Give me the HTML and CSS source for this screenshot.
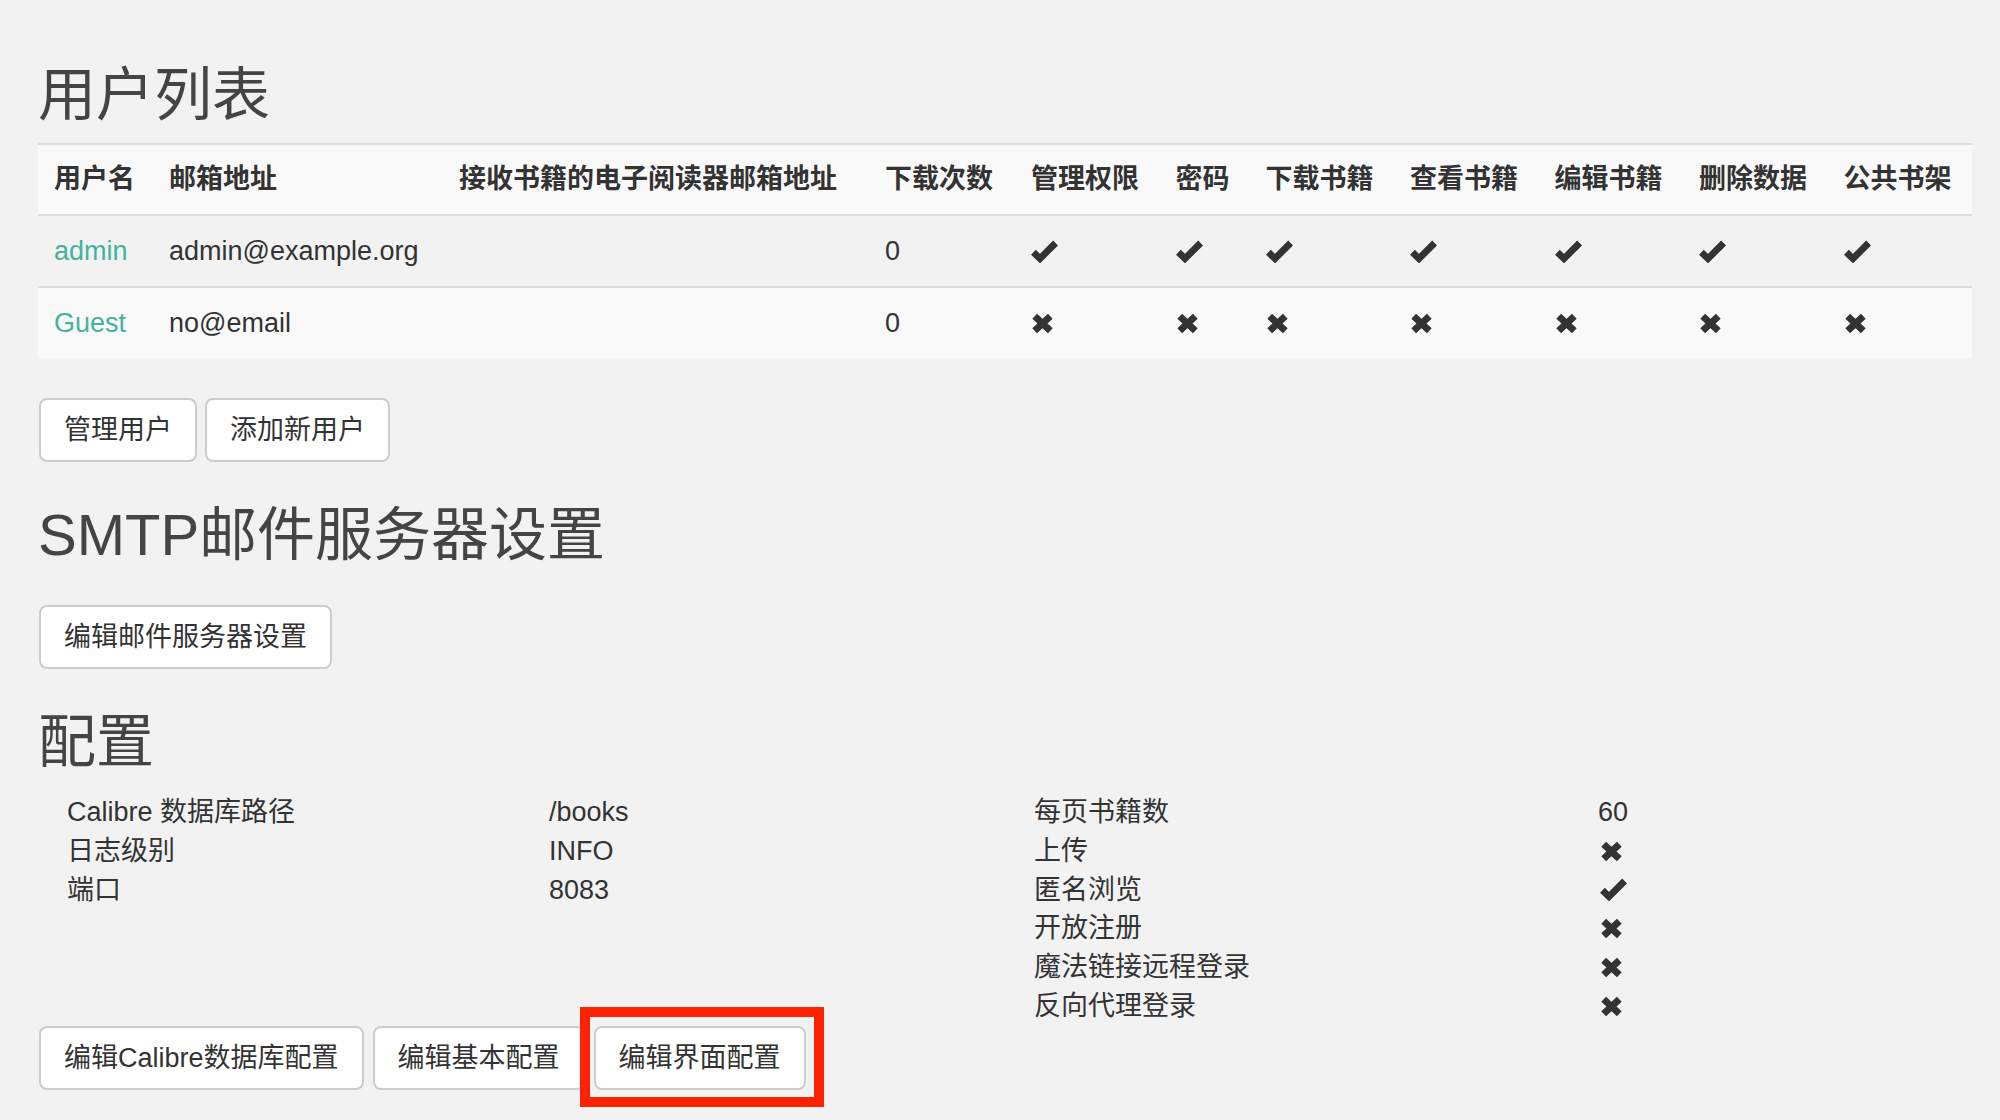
FILE: index.html
```html
<!DOCTYPE html>
<html lang="zh-CN">
<head>
<meta charset="utf-8">
<title>管理</title>
<link rel="stylesheet" href="styles.css">
</head>
<body>
<svg class="defs" width="0" height="0" aria-hidden="true">
  <symbol id="i-ok" viewBox="0 0 27 23">
    <polyline points="2.4,12.2 9,18.6 24.6,3" fill="none" stroke="#333" stroke-width="6.8" stroke-linejoin="miter" stroke-miterlimit="6"/>
  </symbol>
  <symbol id="i-no" viewBox="0 0 23 21">
    <path d="M3.7 3.3 L19.3 17.7 M19.3 3.3 L3.7 17.7" fill="none" stroke="#333" stroke-width="7"/>
  </symbol>
</svg>
<div class="page">
  <h2 class="title first">用户列表</h2>
  <table class="users">
    <colgroup>
      <col class="c-name"><col class="c-mail"><col class="c-kindle"><col class="c-dl">
      <col class="c-4"><col class="c-pw"><col class="c-4"><col class="c-4"><col class="c-4"><col class="c-4"><col class="c-4">
    </colgroup>
    <thead>
      <tr>
        <th>用户名</th><th>邮箱地址</th><th>接收书籍的电子阅读器邮箱地址</th><th>下载次数</th>
        <th>管理权限</th><th>密码</th><th>下载书籍</th><th>查看书籍</th><th>编辑书籍</th><th>删除数据</th><th>公共书架</th>
      </tr>
    </thead>
    <tbody>
      <tr class="odd">
        <td><a class="ulink" href="#">admin</a></td><td>admin@example.org</td><td></td><td>0</td>
        <td><div class="ic"><svg class="ok"><use href="#i-ok"/></svg></div></td>
        <td><div class="ic"><svg class="ok"><use href="#i-ok"/></svg></div></td>
        <td><div class="ic"><svg class="ok"><use href="#i-ok"/></svg></div></td>
        <td><div class="ic"><svg class="ok"><use href="#i-ok"/></svg></div></td>
        <td><div class="ic"><svg class="ok"><use href="#i-ok"/></svg></div></td>
        <td><div class="ic"><svg class="ok"><use href="#i-ok"/></svg></div></td>
        <td><div class="ic"><svg class="ok"><use href="#i-ok"/></svg></div></td>
      </tr>
      <tr class="even">
        <td><a class="ulink" href="#">Guest</a></td><td>no@email</td><td></td><td>0</td>
        <td><div class="ic"><svg class="no"><use href="#i-no"/></svg></div></td>
        <td><div class="ic"><svg class="no"><use href="#i-no"/></svg></div></td>
        <td><div class="ic"><svg class="no"><use href="#i-no"/></svg></div></td>
        <td><div class="ic"><svg class="no"><use href="#i-no"/></svg></div></td>
        <td><div class="ic"><svg class="no"><use href="#i-no"/></svg></div></td>
        <td><div class="ic"><svg class="no"><use href="#i-no"/></svg></div></td>
        <td><div class="ic"><svg class="no"><use href="#i-no"/></svg></div></td>
      </tr>
    </tbody>
  </table>
  <div class="btn-row">
    <a class="btn" href="#">管理用户</a>
    <a class="btn" href="#">添加新用户</a>
  </div>

  <h2 class="title">SMTP邮件服务器设置</h2>
  <div class="btn-row smtp">
    <a class="btn" href="#">编辑邮件服务器设置</a>
  </div>

  <h2 class="title">配置</h2>
  <div class="config">
    <div class="cfg-col">
      <div class="kv kv-left">
        <div>Calibre 数据库路径</div><div>/books</div>
        <div>日志级别</div><div>INFO</div>
        <div>端口</div><div>8083</div>
      </div>
    </div>
    <div class="cfg-col">
      <div class="kv kv-right">
        <div>每页书籍数</div><div>60</div>
        <div>上传</div><div class="ic"><svg class="no"><use href="#i-no"/></svg></div>
        <div>匿名浏览</div><div class="ic"><svg class="ok"><use href="#i-ok"/></svg></div>
        <div>开放注册</div><div class="ic"><svg class="no"><use href="#i-no"/></svg></div>
        <div>魔法链接远程登录</div><div class="ic"><svg class="no"><use href="#i-no"/></svg></div>
        <div>反向代理登录</div><div class="ic"><svg class="no"><use href="#i-no"/></svg></div>
      </div>
    </div>
  </div>
  <div class="btn-row bottom">
    <a class="btn" href="#">编辑Calibre数据库配置</a>
    <a class="btn" href="#">编辑基本配置</a>
    <div class="highlight-wrap">
      <a class="btn" href="#">编辑界面配置</a>
      <div class="highlight"></div>
    </div>
  </div>
</div>
</body>
</html>
```

FILE: styles.css
```css
html, body {
  margin: 0;
  padding: 0;
  background: #f2f2f2;
}

body {
  font-family: "Liberation Sans", "Noto Sans CJK SC", sans-serif;
  font-size: 27px;
  line-height: 38.6px;
  color: #333;
}

.defs {
  position: absolute;
  width: 0;
  height: 0;
  overflow: hidden;
}

.page {
  box-sizing: border-box;
  min-height: 1120px;
  padding: 22px 28px 0 38px;
}

.title {
  font-size: 58px;
  font-weight: 400;
  line-height: 64px;
  color: #444;
  margin: 41px 0 19px;
}

.title.first {
  margin-bottom: 16px;
}

/* users table */
.users {
  width: 100%;
  table-layout: fixed;
  border-collapse: collapse;
  border-spacing: 0;
  margin-bottom: 40px;
}

.c-name { width: 115px; }
.c-mail { width: 290px; }
.c-kindle { width: 426px; }
.c-dl { width: 146px; }
.c-4 { width: 144.5px; }
.c-pw { width: 90px; }

.users th,
.users td {
  text-align: left;
  vertical-align: middle;
  border-top: 2px solid #dddddd;
  padding: 15px 16px;
  line-height: 39px;
  white-space: nowrap;
}

.users td {
  padding: 16px 16px 15px;
}

.users th {
  font-weight: 700;
  color: #333;
}

.users thead tr {
  background: #f9f9f9;
}

.users tr.odd {
  background: #f2f2f2;
}

.users tr.even {
  background: #f9f9f9;
}

.ulink {
  color: #45b29d;
  text-decoration: none;
}

.ic {
  display: flex;
  align-items: center;
  height: 39px;
}

.ic svg.ok {
  width: 27px;
  height: 23px;
}

.ic svg.no {
  width: 23px;
  height: 21px;
}

/* buttons */
.btn-row {
  display: flex;
  align-items: flex-start;
  gap: 8px;
  padding-left: 1px;
}

.btn-row.smtp {
  margin-top: 38px;
  margin-bottom: 1px;
}

.btn-row.bottom {
  gap: 9px;
}

.btn {
  display: block;
  box-sizing: border-box;
  padding: 11px 23px;
  font-size: 27px;
  line-height: 38px;
  color: #333;
  background: #fff;
  border: 2px solid #cccccc;
  border-radius: 8px;
  text-decoration: none;
  white-space: nowrap;
}

.highlight-wrap {
  position: relative;
}

.highlight {
  position: absolute;
  left: -14px;
  top: -19px;
  right: -18px;
  bottom: -17px;
  border: 10px solid #ff2200;
  pointer-events: none;
}

/* config */
.config {
  display: grid;
  grid-template-columns: 1fr 1fr;
}

.cfg-col {
  padding: 0 29px;
}

.kv {
  display: grid;
  line-height: 38.8px;
}

.kv-left {
  grid-template-columns: 482px 1fr;
}

.kv-right {
  grid-template-columns: 564px 1fr;
}

.kv .ic {
  height: 38.8px;
  padding-left: 2px;
}
```
